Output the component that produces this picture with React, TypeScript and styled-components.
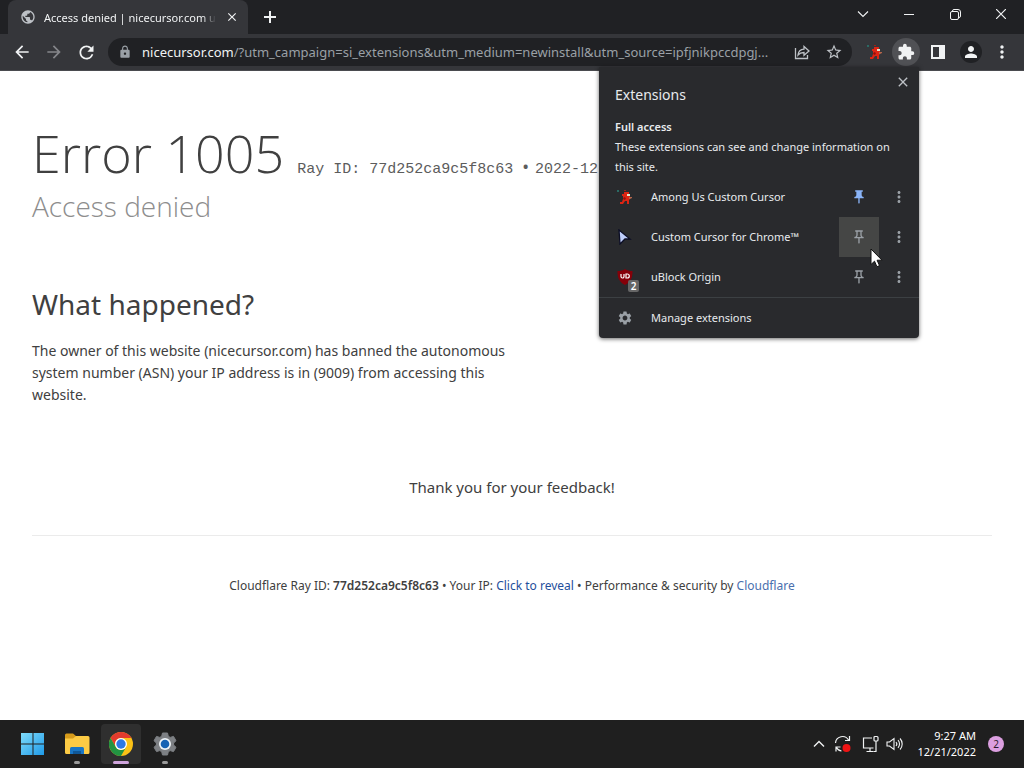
import React from "react";
import styled, { createGlobalStyle, css } from "styled-components";
import {
  MdArrowBack,
  MdArrowForward,
  MdClose,
  MdExtension,
  MdLock,
  MdMoreVert,
  MdOutlinePushPin,
  MdPerson,
  MdPublic,
  MdPushPin,
  MdRefresh,
  MdSettings,
  MdStarBorder,
} from "react-icons/md";

const GlobalStyle = createGlobalStyle`
  *, *::before, *::after { box-sizing: border-box; }
  body {
    margin: 0;
    font-family: "Noto Sans", "Open Sans", sans-serif;
    background: #fff;
  }
  button, input { font: inherit; color: inherit; }
  button { border: 0; padding: 0; background: none; }
  h1, h2, p, ul { margin: 0; padding: 0; font-weight: 400; }
  ul { list-style: none; }
  a { text-decoration: none; }
`;

const Desktop = styled.div`
  display: flex;
  flex-direction: column;
  min-height: 100vh;
`;

/* ---------- browser chrome ---------- */

const TabStrip = styled.header`
  display: flex;
  height: 34px;
  padding-left: 8px;
  background: #202124;
  color: #f1f3f4;
`;

const Tab = styled.div`
  display: flex;
  align-items: center;
  gap: 8px;
  width: 240px;
  padding: 0 8px 0 12px;
  background: #35363a;
  border-radius: 8px 8px 0 0;
  font-size: 11px;
`;

const TabTitle = styled.span`
  flex: 1;
  min-width: 0;
  white-space: nowrap;
  mask-image: linear-gradient(to right, #000 92%, transparent);
`;

const IconButton = styled.button<{ $w?: number; $h?: number; $color?: string; $active?: boolean }>`
  display: flex;
  flex: none;
  align-items: center;
  justify-content: center;
  width: ${(p) => p.$w ?? 32}px;
  height: ${(p) => p.$h ?? 28}px;
  color: ${(p) => p.$color ?? "#f1f3f4"};
  ${(p) =>
    p.$active &&
    css`
      background: #505155;
      border-radius: 50%;
    `}
`;

const WindowControls = styled.div`
  display: flex;
  margin-left: auto;
`;

const Toolbar = styled.nav`
  position: relative;
  display: flex;
  align-items: center;
  height: 37px;
  padding: 0 6px;
  background: #35363a;
  border-bottom: 1px solid #4a4b4f;
  color: #f1f3f4;
`;

const Omnibox = styled.div`
  display: flex;
  flex: 1;
  align-items: center;
  min-width: 0;
  height: 28px;
  margin: 0 6px;
  padding: 0 2px 0 10px;
  border-radius: 14px;
  background: #202124;
  font-size: 13px;
`;

const SiteLock = styled.span`
  display: flex;
  width: 24px;
  color: #9aa0a6;
`;

const UrlInput = styled.input`
  flex: 1;
  min-width: 0;
  padding: 0;
  border: 0;
  outline: 0;
  background: none;
  color: #9aa0a6;
`;

const Avatar = styled.span`
  display: flex;
  align-items: center;
  justify-content: center;
  width: 22px;
  height: 22px;
  border-radius: 50%;
  background: #202124;
`;

/* ---------- extensions popup ---------- */

const Popup = styled.section`
  position: absolute;
  z-index: 2;
  top: 33px;
  right: 105px;
  width: 320px;
  padding-top: 16px;
  border-radius: 0 0 4px 4px;
  background: #292a2d;
  color: #e8eaed;
  font-size: 11px;
  line-height: 20px;
  box-shadow: 0 1px 4px rgba(0, 0, 0, 0.6);
`;

const PopupClose = styled.button`
  position: absolute;
  top: 7px;
  right: 8px;
  display: flex;
  color: #bdc1c6;
`;

const PopupTitle = styled.h2`
  padding: 0 16px;
  font-size: 14px;
  line-height: 24px;
`;

const Access = styled.div`
  padding: 10px 16px 0;

  strong { font-weight: 600; }
`;

const Row = styled.li`
  display: flex;
  align-items: center;
  height: 40px;
`;

const RowMain = styled.button`
  display: flex;
  flex: 1;
  align-items: center;
  height: 40px;
  padding-left: 16px;
  gap: 16px;
  text-align: left;
`;

const RowIcon = styled.span`
  position: relative;
  display: flex;
  align-items: center;
  justify-content: center;
  width: 20px;
  height: 20px;
  color: #9aa0a6;
`;

const CountBadge = styled.span`
  position: absolute;
  right: -4px;
  bottom: -5px;
  width: 11px;
  height: 12px;
  border-radius: 2px;
  background: #666;
  color: #fff;
  font-size: 10px;
  font-weight: 600;
  line-height: 12px;
  text-align: center;
`;

const PinButton = styled(IconButton)<{ $hover?: boolean }>`
  background: ${(p) => (p.$hover ? "#454645" : "transparent")};
`;

const ManageRow = styled(RowMain)`
  width: 100%;
  height: 41px;
  border-top: 1px solid #3c4043;
`;

const Pointer = styled.svg`
  position: absolute;
  top: 181px;
  right: 36px;
`;

/* ---------- page ---------- */

const Page = styled.main`
  position: relative;
  flex: 1;
  padding: 45px 32px 0;
  color: #404040;
`;

const Heading = styled.h1`
  display: flex;
  align-items: baseline;
  gap: 13px;
  white-space: nowrap;
  font-family: "Open Sans", sans-serif;
  font-size: 52px;
  font-weight: 300;
  line-height: 74px;
`;

const RayMeta = styled.span`
  display: flex;
  align-items: baseline;
  gap: 9px;
  font-family: "Liberation Mono", monospace;
  font-size: 15px;
  font-weight: 400;
  line-height: 20px;
  color: #5c5c5c;
`;

const Bullet = styled.span`
  margin-right: -3px;
  font-family: "Noto Sans", sans-serif;
  font-size: 18px;
`;

const Subtitle = styled.p`
  font-family: "Open Sans", sans-serif;
  font-size: 28px;
  font-weight: 300;
  line-height: 32px;
  color: #8d8d8d;
`;

const Section = styled.section`
  width: 50%;
  padding-top: 62px;
`;

const SectionTitle = styled.h2`
  font-size: 28px;
  line-height: 40px;
`;

const Body = styled.p`
  padding-top: 16px;
  font-size: 14px;
  line-height: 22px;
`;

const Thanks = styled.p`
  padding: 69px 0 36px;
  font-size: 15px;
  line-height: 24px;
  text-align: center;
`;

const Footer = styled.footer`
  padding: 40px 0;
  border-top: 1px solid #ebebeb;
  font-size: 12px;
  line-height: 20px;
  text-align: center;

  strong { font-weight: 600; }
`;

const FooterLink = styled.a<{ $strong?: boolean }>`
  color: ${(p) => (p.$strong ? "#1f4f9c" : "#4a6fae")};
`;

/* ---------- taskbar ---------- */

const Taskbar = styled.footer`
  display: flex;
  align-items: center;
  height: 48px;
  padding: 0 20px 0 13px;
  background: #1f1f1f;
  color: #fff;
`;

const Apps = styled.div`
  display: flex;
  gap: 4px;
`;

const AppButton = styled.button<{ $state?: "open" | "active" }>`
  display: flex;
  flex-direction: column;
  align-items: center;
  justify-content: space-between;
  width: 40px;
  height: 40px;
  padding-top: 8px;
  border-radius: 4px;
  background: ${(p) => (p.$state === "active" ? "#2f2f2f" : "transparent")};

  &::after {
    content: "";
    width: ${(p) => (p.$state === "active" ? 16 : p.$state ? 6 : 0)}px;
    height: 3px;
    border-radius: 2px;
    background: ${(p) => (p.$state === "active" ? "#cfa4dc" : "#9a9a9a")};
  }
`;

const Tray = styled.div`
  display: flex;
  align-items: center;
  margin-left: auto;
`;

const Clock = styled.button`
  padding: 0 12px;
  font-size: 11px;
  line-height: 16px;
  text-align: right;
`;

const Notice = styled.button`
  width: 16px;
  height: 16px;
  border-radius: 50%;
  background: #dc9fe0;
  color: #2a1a2c;
  font-size: 10px;
  line-height: 16px;
`;

/* ---------- drawings ---------- */

const Runner = ({ size = 16 }: { size?: number }) => (
  <svg width={size} height={size} viewBox="0 0 16 16" aria-hidden="true">
    <path d="M0 1h2v2H0z" fill="#2b6a64" />
    <path d="M7 1h2v1H7z" fill="#a02016" />
    <path d="M7 3h5v3l1 1v3l-1 1v4h-2v-3H8l-2 3H3v-2h2l1-3V7H5V5h2z" fill="#dc2413" />
    <path d="M10 5h3v2h-3z" fill="#dfe6cf" />
    <path d="M12 8h3v1l-2 1h-1z" fill="#b5654a" />
    <path d="M7 8l2 1-1 2-2-1z" fill="#8c120c" />
  </svg>
);

const BlueCursor = () => (
  <svg width="16" height="16" viewBox="0 0 16 16" aria-hidden="true">
    <path d="M2 1l11 9H8l-5 5z" fill="#bdcdfb" stroke="#0b0d24" strokeWidth="1.300" />
  </svg>
);

const Shield = () => (
  <svg width="16" height="16" viewBox="0 0 16 16" aria-hidden="true">
    <path d="M8 0c2 1.600 4.500 2 7.500 2 0 6-1 10.500-7.500 14C1.500 12.500.5 8 .5 2 3.500 2 6 1.600 8 0z" fill="#850009" />
    <path
      d="M4 5v2.500a1.500 1.500 0 003 0V5M9 5v4h1.300a2 2 0 000-4z"
      fill="none"
      stroke="#fff"
      strokeWidth="1.200"
    />
  </svg>
);

const strokeProps = { fill: "none", stroke: "currentColor", strokeWidth: 1 };

const ShareIcon = () => (
  <svg width="16" height="16" viewBox="0 0 16 16" {...strokeProps} strokeWidth={1.3}>
    <path d="M1.500 4v10.500h12V11M4 11c.4-3.700 2.600-5.600 6-5.800V2.500L15 7l-5 4.300V8.500C7.500 8.500 5.500 9.200 4 11z" />
  </svg>
);

const PanelIcon = () => (
  <svg width="16" height="16" viewBox="0 0 16 16" aria-hidden="true">
    <path d="M1 1h14v14H1zM3 3v10h6V3z" fill="currentColor" fillRule="evenodd" />
  </svg>
);

const PlusIcon = () => (
  <svg width="14" height="14" viewBox="0 0 14 14" {...strokeProps} strokeWidth={2}>
    <path d="M7 1v12M1 7h12" />
  </svg>
);

const ChevronIcon = ({ up }: { up?: boolean }) => (
  <svg width="12" height="8" viewBox="0 0 12 8" {...strokeProps} strokeWidth={up ? 1.4 : 1.1}>
    <path d={up ? "M1 6.500l5-5 5 5" : "M1 1.500l5 5 5-5"} />
  </svg>
);

const MinimizeIcon = () => (
  <svg width="10" height="10" viewBox="0 0 10 10" {...strokeProps}>
    <path d="M0 5.500h10" />
  </svg>
);

const RestoreIcon = () => (
  <svg width="11" height="11" viewBox="0 0 11 11" {...strokeProps}>
    <rect x="0.500" y="2.500" width="8" height="8" rx="1.500" />
    <path d="M2.500 2.500V2A1.500 1.500 0 014 .5h4A2.500 2.500 0 0110.500 3v4A1.500 1.500 0 019 8.500" />
  </svg>
);

const CloseIcon = () => (
  <svg width="10" height="10" viewBox="0 0 10 10" {...strokeProps} strokeWidth={1.2}>
    <path d="M0 0l10 10M10 0L0 10" />
  </svg>
);

const StartIcon = () => (
  <svg width="24" height="24" viewBox="0 0 24 24" aria-hidden="true">
    <defs>
      <linearGradient id="start" x1="0" y1="0" x2="1" y2="1">
        <stop offset="0" stopColor="#7fdcfb" />
        <stop offset="1" stopColor="#1f9ae8" />
      </linearGradient>
    </defs>
    <path d="M0 1h11.500v10.500H0zM12.500 1H23v10.500H12.500zM0 12.500h11.500V23H0zM12.500 12.500H23V23H12.500z" fill="url(#start)" />
  </svg>
);

const FolderIcon = () => (
  <svg width="26" height="24" viewBox="0 0 26 24" aria-hidden="true">
    <path d="M1 3a1.500 1.500 0 011.500-1.500H9L12 4v5H1z" fill="#d69b1b" />
    <path d="M1 6.500h8L12 4h12a1.500 1.500 0 011.500 1.500v15A1.500 1.500 0 0124 22H2.500A1.500 1.500 0 011 20.500z" fill="#fccb45" />
    <path d="M6 22v-5.500A1.500 1.500 0 017.500 15h11a1.500 1.500 0 011.500 1.500V22z" fill="#1976c5" />
    <path d="M9 22v-3h8v3z" fill="#0f5797" />
  </svg>
);

const ChromeIcon = () => (
  <svg width="24" height="24" viewBox="0 0 24 24" aria-hidden="true">
    <circle cx="12" cy="12" r="12" fill="#fbc116" />
    <path d="M1.600 6A12 12 0 0122.400 6H12a6 6 0 00-5.200 9z" fill="#e33b2e" />
    <path d="M1.600 6A12 12 0 0012 24l5.200-9A6 6 0 016.800 15z" fill="#229342" />
    <circle cx="12" cy="12" r="6" fill="#fff" />
    <circle cx="12" cy="12" r="4.700" fill="#2c78e4" />
  </svg>
);

const GearIcon = () => (
  <svg width="24" height="24" viewBox="0 0 24 24" aria-hidden="true">
    <path
      d="M9.500 1h5l.8 3.300 1.900 1.100 3.300-1L23 8.700 20.600 11v2l2.400 2.300-2.500 4.300-3.300-1-1.900 1.100-.8 3.300h-5l-.8-3.300-1.900-1.100-3.300 1L1 15.300 3.400 13v-2L1 8.700l2.500-4.300 3.300 1 1.900-1.100z"
      fill="#7d8084"
      stroke="#7d8084"
      strokeLinejoin="round"
    />
    <circle cx="12" cy="12" r="6" fill="#eef3f7" />
    <circle cx="12" cy="12" r="4.300" fill="#1763b4" />
  </svg>
);

const SyncIcon = () => (
  <svg width="18" height="18" viewBox="0 0 18 18" {...strokeProps} strokeWidth={1.2}>
    <path d="M1.500 8a7 7 0 0113-3M15.500 1v4.500H11M2 16.500V12h4.500M2.500 12.500a6.500 6.500 0 005 3.500" />
    <circle cx="12.500" cy="13" r="4" fill="#f01414" stroke="none" />
  </svg>
);

const NetworkIcon = () => (
  <svg width="18" height="18" viewBox="0 0 18 18" {...strokeProps} strokeWidth={1.2}>
    <path d="M11 3H2.500v10h10M5.500 16.500h7M9 13v3.500" />
    <rect x="13" y="1.500" width="4" height="4.500" rx="1" />
    <path d="M15 6v10.500h-2.500" />
  </svg>
);

const VolumeIcon = () => (
  <svg width="18" height="16" viewBox="0 0 18 16" {...strokeProps} strokeWidth={1.1}>
    <path d="M1 6v4h2.500L8 13.500v-11L3.500 6zM10 6a3 3 0 010 4M12 4.200a5.500 5.500 0 010 7.600M14 2.500a8 8 0 010 11" />
  </svg>
);

const extensions = [
  { name: "Among Us Custom Cursor", icon: <Runner />, pinned: true },
  { name: "Custom Cursor for Chrome™", icon: <BlueCursor />, hover: true },
  { name: "uBlock Origin", icon: <Shield />, count: 2 },
];

function ExtensionsPopup() {
  return (
    <Popup aria-label="Extensions">
      <PopupClose aria-label="Close">
        <MdClose size={16} />
      </PopupClose>
      <PopupTitle>Extensions</PopupTitle>
      <Access>
        <strong>Full access</strong>
        <p>These extensions can see and change information on this site.</p>
      </Access>
      <ul>
        {extensions.map((e) => (
          <Row key={e.name}>
            <RowMain>
              <RowIcon>
                {e.icon}
                {e.count && <CountBadge>{e.count}</CountBadge>}
              </RowIcon>
              {e.name}
            </RowMain>
            <PinButton
              $w={40}
              $h={40}
              $hover={e.hover}
              $color={e.pinned ? "#8ab4f8" : "#9aa0a6"}
              aria-label={e.pinned ? "Unpin" : "Pin"}
            >
              {e.pinned ? <MdPushPin size={16} /> : <MdOutlinePushPin size={16} />}
            </PinButton>
            <IconButton $w={40} $h={40} $color="#9aa0a6" aria-label="More options">
              <MdMoreVert size={18} />
            </IconButton>
          </Row>
        ))}
      </ul>
      <ManageRow>
        <RowIcon>
          <MdSettings size={16} />
        </RowIcon>
        Manage extensions
      </ManageRow>
      <Pointer width="13" height="20" viewBox="0 0 13 20" aria-hidden="true">
        <path d="M1 1v15.500l3.500-3.300 2.400 5.500 2.600-1.100-2.400-5.400H12z" fill="#fff" stroke="#111" />
      </Pointer>
    </Popup>
  );
}

export default function App() {
  return (
    <Desktop>
      <GlobalStyle />
      <TabStrip>
        <Tab>
          <MdPublic size={16} color="#bdc1c6" />
          <TabTitle>Access denied | nicecursor.com u</TabTitle>
          <IconButton $w={16} $h={16} aria-label="Close tab">
            <MdClose size={14} />
          </IconButton>
        </Tab>
        <IconButton $w={44} $h={34} aria-label="New tab">
          <PlusIcon />
        </IconButton>
        <WindowControls>
          <IconButton $w={46} aria-label="Search tabs"><ChevronIcon /></IconButton>
          <IconButton $w={46} aria-label="Minimize"><MinimizeIcon /></IconButton>
          <IconButton $w={46} aria-label="Restore"><RestoreIcon /></IconButton>
          <IconButton $w={46} aria-label="Close"><CloseIcon /></IconButton>
        </WindowControls>
      </TabStrip>

      <Toolbar>
        <IconButton aria-label="Back"><MdArrowBack size={20} /></IconButton>
        <IconButton $color="#85868a" aria-label="Forward"><MdArrowForward size={20} /></IconButton>
        <IconButton aria-label="Reload"><MdRefresh size={21} /></IconButton>
        <Omnibox>
          <SiteLock><MdLock size={14} /></SiteLock>
          <label htmlFor="url">nicecursor.com</label>
          <UrlInput
            id="url"
            defaultValue="/?utm_campaign=si_extensions&utm_medium=newinstall&utm_source=ipfjnikpccdpgj..."
          />
          <IconButton $color="#bdc1c6" aria-label="Share"><ShareIcon /></IconButton>
          <IconButton $color="#bdc1c6" aria-label="Bookmark"><MdStarBorder size={18} /></IconButton>
        </Omnibox>
        <IconButton $w={34} aria-label="Among Us Custom Cursor"><Runner /></IconButton>
        <IconButton $w={28} $active aria-label="Extensions menu"><MdExtension size={18} /></IconButton>
        <IconButton $w={36} aria-label="Side panel"><PanelIcon /></IconButton>
        <IconButton $w={30} aria-label="Profile">
          <Avatar><MdPerson size={18} /></Avatar>
        </IconButton>
        <IconButton aria-label="Menu"><MdMoreVert size={20} /></IconButton>
        <ExtensionsPopup />
      </Toolbar>

      <Page>
        <Heading>
          Error 1005
          <RayMeta>
            <span>Ray ID: 77d252ca9c5f8c63</span>
            <Bullet>•</Bullet>
            <span>2022-12</span>
          </RayMeta>
        </Heading>
        <Subtitle>Access denied</Subtitle>
        <Section>
          <SectionTitle>What happened?</SectionTitle>
          <Body>
            The owner of this website (nicecursor.com) has banned the autonomous system number (ASN)
            your IP address is in (9009) from accessing this website.
          </Body>
        </Section>
        <Thanks>Thank you for your feedback!</Thanks>
        <Footer>
          Cloudflare Ray ID: <strong>77d252ca9c5f8c63</strong> • Your IP:{" "}
          <FooterLink $strong href="#reveal">Click to reveal</FooterLink> • Performance &amp;
          security by <FooterLink href="#cloudflare">Cloudflare</FooterLink>
        </Footer>
      </Page>

      <Taskbar>
        <Apps>
          <AppButton aria-label="Start"><StartIcon /></AppButton>
          <AppButton $state="open" aria-label="File Explorer"><FolderIcon /></AppButton>
          <AppButton $state="active" aria-label="Chrome"><ChromeIcon /></AppButton>
          <AppButton $state="open" aria-label="Settings"><GearIcon /></AppButton>
        </Apps>
        <Tray>
          <IconButton $w={24} aria-label="Show hidden icons"><ChevronIcon up /></IconButton>
          <IconButton $w={24} aria-label="Updates"><SyncIcon /></IconButton>
          <IconButton $w={30} aria-label="Network"><NetworkIcon /></IconButton>
          <IconButton $w={20} aria-label="Volume"><VolumeIcon /></IconButton>
          <Clock>
            9:27 AM
            <br />
            12/21/2022
          </Clock>
          <Notice aria-label="Notifications">2</Notice>
        </Tray>
      </Taskbar>
    </Desktop>
  );
}
